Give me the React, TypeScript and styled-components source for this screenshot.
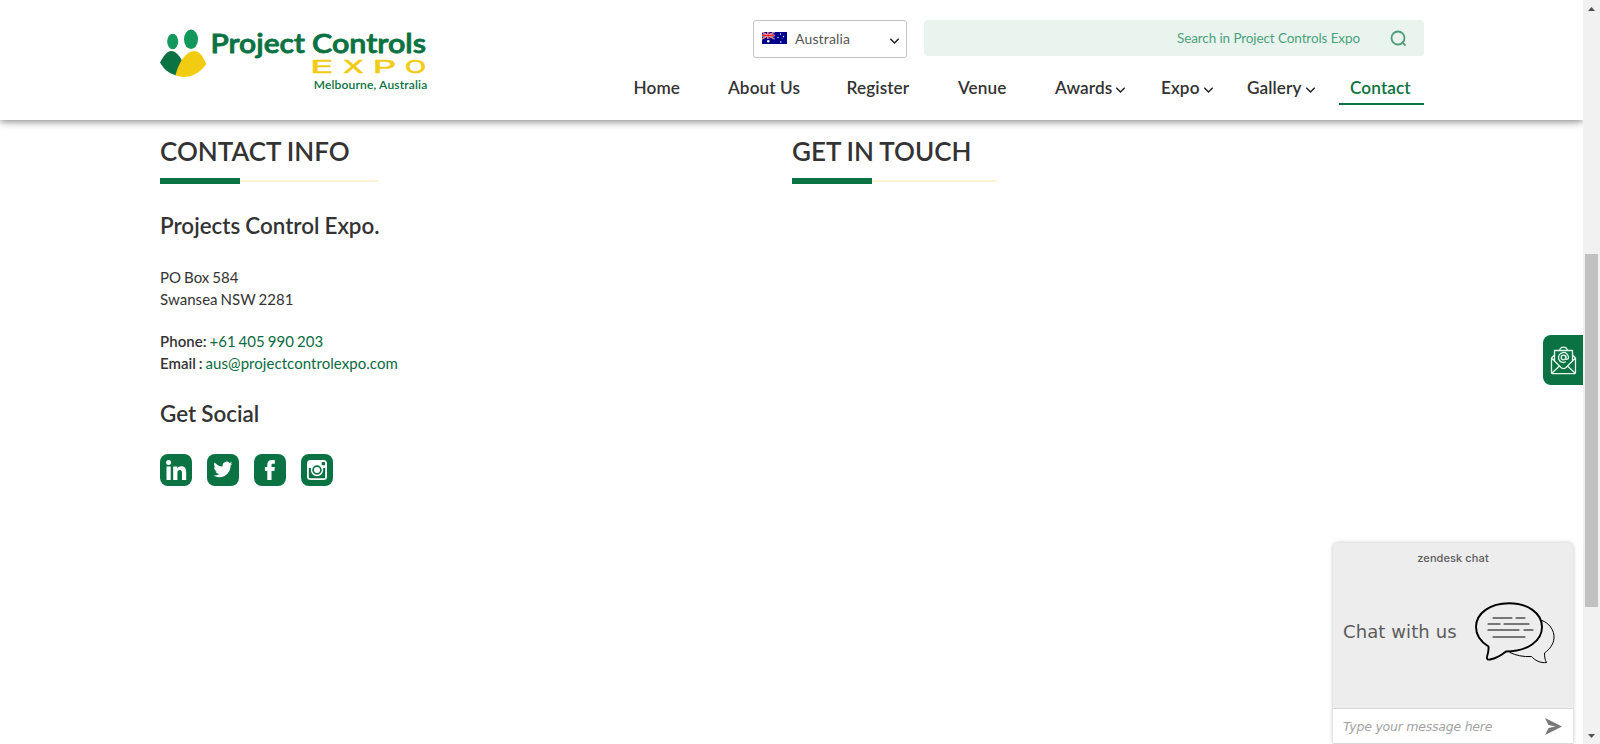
import React from 'react';
import styled, { createGlobalStyle } from 'styled-components';

const green = '#0b7243';

const GlobalStyle = createGlobalStyle`
  * { box-sizing: border-box; }
  body { margin: 0; background: #fff; overflow: hidden; font-family: Lato, "Liberation Sans", sans-serif; color: #333; }
  a { color: inherit; text-decoration: none; }
`;

const Shell = styled.div`
  display: flex;
  width: 1600px;
  height: 744px;
  overflow: hidden;
`;
const Page = styled.div`
  position: relative;
  flex: 1;
  overflow: hidden;
`;
const Header = styled.header`
  height: 120px;
  padding: 20px 159px 0 160px;
  display: flex;
  justify-content: space-between;
  background: #fff;
  box-shadow: 0 1px 8px rgba(0, 0, 0, 0.55);
`;
const Logo = styled.svg`
  display: block;
  width: 290px;
  height: 80px;
`;
const HeaderRight = styled.div`
  display: flex;
  flex-direction: column;
  align-items: flex-end;
`;
const Tools = styled.div`
  display: flex;
  gap: 17px;
`;
const CountrySelect = styled.div`
  width: 154px;
  height: 38px;
  padding: 0 6px 0 8px;
  display: flex;
  align-items: center;
  border: 1px solid #c4c4c4;
  border-radius: 3px;
  color: #555;
  font-size: 14px;
  line-height: 36px;
  letter-spacing: 0.15px;
  > svg:last-child { margin-top: 3px; }
`;
const Flag = styled.svg`
  width: 25px;
  height: 12px;
  margin: 0 8px 2px 0;
`;
const Country = styled.span`
  flex: 1;
`;
const Search = styled.div`
  width: 500px;
  height: 36px;
  padding: 0 17px 0 0;
  display: flex;
  justify-content: flex-end;
  align-items: center;
  gap: 30px;
  border-radius: 4px;
  background: #eaf4ef;
  color: #4aa27b;
  font-size: 13.5px;
  letter-spacing: -0.1px;
`;
const Nav = styled.nav`
  display: flex;
  margin-top: 18px;
`;
const NavItem = styled.a<{ $w: number; $active?: boolean }>`
  width: ${p => p.$w}px;
  height: 29px;
  padding: 0 0 3px ${p => (p.$active ? 11 : 0)}px;
  display: flex;
  align-items: center;
  gap: 3px;
  font-size: 17.2px;
  line-height: 24px;
  letter-spacing: 0.1px;
  font-weight: 600;
  white-space: nowrap;
  color: ${p => (p.$active ? green : '#333')};
  border-bottom: 2px solid ${p => (p.$active ? green : 'transparent')};
  svg { margin-top: 3px; }
`;
const Main = styled.main`
  display: grid;
  grid-template-columns: 632px 1fr;
  padding: 15px 0 0 160px;
`;
const SectionTitle = styled.h2`
  margin: 0;
  font-size: 26px;
  line-height: 32px;
  font-weight: 600;
  word-spacing: -0.5px;
`;
const Rule = styled.div<{ $w: number }>`
  width: ${p => p.$w}px;
  height: 6px;
  margin-top: 11px;
  display: flex;
  align-items: center;
  &::before { content: ''; width: 80px; height: 6px; background: ${green}; }
  &::after { content: ''; flex: 1; height: 2px; background: #fdf3d3; }
`;
const SubTitle = styled.h3<{ $top: number }>`
  margin: ${p => p.$top}px 0 0;
  font-size: 22.4px;
  line-height: 28px;
  font-weight: 600;
  word-spacing: -0.5px;
`;
const Details = styled.p<{ $top: number }>`
  margin: ${p => p.$top}px 0 0;
  font-size: 15px;
  line-height: 22px;
  letter-spacing: 0.05px;
  word-spacing: -1px;
  b { font-weight: 600; }
  a { color: #0b6a41; }
`;
const Socials = styled.div`
  display: flex;
  gap: 15px;
  margin-top: 26px;
`;
const SocialLink = styled.a`
  width: 32px;
  height: 32px;
  border-radius: 8px;
  background: ${green};
  svg { display: block; width: 32px; height: 32px; }
`;
const MailTab = styled.a`
  position: absolute;
  right: 0;
  top: 335px;
  width: 40px;
  height: 50px;
  border-radius: 8px 0 0 8px;
  background: ${green};
  svg { display: block; }
`;
const Chat = styled.section`
  position: absolute;
  left: 1333px;
  top: 543px;
  width: 240px;
  height: 201px;
  display: flex;
  flex-direction: column;
  background: #ededed;
  border-radius: 5px 5px 0 0;
  box-shadow: 0 0 4px rgba(0, 0, 0, 0.25);
  color: #5c5c5c;
  font-family: "DejaVu Sans", sans-serif;
`;
const ChatBrand = styled.div`
  padding-top: 7px;
  height: 34px;
  text-align: center;
  font: 500 11px/16px Inter, sans-serif;
  letter-spacing: 0.1px;
`;
const ChatBody = styled.div`
  flex: 1;
  display: flex;
  padding-left: 10px;
  font-size: 18px;
  line-height: 110px;
  letter-spacing: 0.1px;
  white-space: nowrap;
  svg { display: block; margin: 19px 1px 0 auto; }
`;
const ChatInput = styled.div`
  height: 36px;
  padding: 0 11px 0 10px;
  display: flex;
  align-items: center;
  justify-content: space-between;
  background: #fff;
  border: 1px solid #d8d8d8;
  border-width: 1px 0;
  color: #a3a3a3;
  font-size: 12.5px;
  letter-spacing: -0.23px;
  font-style: italic;
`;
const Scrollbar = styled.div`
  width: 17px;
  height: 744px;
  display: flex;
  flex-direction: column;
  justify-content: space-between;
  align-items: center;
  background: #f1f1f1;
  svg { display: block; }
`;
const Track = styled.div`
  flex: 1;
  padding-top: 237px;
`;
const Thumb = styled.div`
  width: 13px;
  height: 353px;
  background: #c1c1c1;
`;

const Chevron = () => (
  <svg width="11" height="8" viewBox="0 0 11 8" fill="none" stroke="#222" strokeWidth="1.5">
    <path d="M1.3 1.800 5.500 6 9.700 1.800" />
  </svg>
);

const nav = [
  { label: 'Home', w: 94.5 },
  { label: 'About Us', w: 118.5 },
  { label: 'Register', w: 111.5 },
  { label: 'Venue', w: 97 },
  { label: 'Awards', w: 106, menu: true },
  { label: 'Expo', w: 86, menu: true },
  { label: 'Gallery', w: 92, menu: true },
  { label: 'Contact', w: 85, active: true },
];

const expo = [
  { letter: 'E', x: 150.1, sx: 2.25 },
  { letter: 'X', x: 183.2, sx: 1.7 },
  { letter: 'P', x: 212.7, sx: 2.1 },
  { letter: 'O', x: 245, sx: 1.58 },
];

const socials = [
  {
    name: 'LinkedIn',
    art: (
      <g fill="#fff">
        <circle cx="8.600" cy="8.400" r="2.500" />
        <path d="M6.500 12.500h4.200V26H6.500zM13.200 12.500h4v1.900c.8-1.400 2.300-2.200 4.100-2.200 4 0 4.900 2.600 4.900 6.200V26H22v-6.800c0-1.800-.3-3.300-2.200-3.300s-2.400 1.400-2.400 3.200V26h-4.200z" />
      </g>
    ),
  },
  {
    name: 'Twitter',
    art: (
      <path
        transform="translate(6.300 5.900) scale(.8)"
        fill="#fff"
        d="M23.950 4.570a10 10 0 0 1-2.820.77 4.960 4.960 0 0 0 2.160-2.720c-.95.55-2 .95-3.130 1.180a4.920 4.920 0 0 0-8.380 4.480C7.690 8.090 4.070 6.130 1.640 3.160a4.800 4.800 0 0 0-.67 2.480c0 1.710.87 3.210 2.190 4.100a4.900 4.900 0 0 1-2.230-.62v.06a4.920 4.920 0 0 0 3.950 4.830 5 5 0 0 1-2.210.08 4.940 4.940 0 0 0 4.600 3.420A9.870 9.870 0 0 1 0 19.540a13.990 13.990 0 0 0 7.560 2.210c9.050 0 14-7.500 14-13.980 0-.21 0-.42-.02-.63a9.940 9.940 0 0 0 2.460-2.550z"
      />
    ),
  },
  {
    name: 'Facebook',
    art: <path fill="#fff" d="M13.300 26V16.900h-2.400v-3.800h2.400v-2.400c0-3 1.500-4.700 4.500-4.700h3v3.700h-1.900c-1.200 0-1.400.5-1.400 1.400v2h3.300l-.4 3.800h-2.900V26z" />,
  },
  {
    name: 'Instagram',
    art: (
      <>
        <rect x="6" y="6" width="20" height="20" rx="3.500" fill="#fff" />
        <path d="M7.800 14h16.400v8.700a1.500 1.500 0 0 1-1.500 1.500H9.300a1.500 1.500 0 0 1-1.500-1.500z" fill={green} />
        <circle cx="16" cy="16" r="6.200" fill="#fff" />
        <circle cx="16" cy="16" r="3.900" fill="none" stroke={green} strokeWidth="1.700" />
        <rect x="20.700" y="8" width="3.300" height="3.300" rx=".5" fill={green} />
      </>
    ),
  },
];

function BrandLogo() {
  return (
    <Logo viewBox="0 0 290 80">
      <ellipse cx="12.700" cy="21.500" rx="5.500" ry="7.700" fill="#12985a" />
      <ellipse cx="31" cy="19.300" rx="7" ry="9.700" fill="#12985a" />
      <path d="M0 42.500C3 37 6.500 31 11.500 31c4 0 8 5 10.500 9.500L16 55.400C9 53.500 3.500 49 0 42.500z" fill={green} />
      <path d="M15.500 55.300C18 44 25.500 31 34.500 31 39.500 31 44 38 46.200 44.200 39 54.500 27 60 15.500 55.300z" fill="#f2cb13" />
      <g fill={green} stroke={green} fontFamily="Lato, sans-serif">
        <text x="50.500" y="33.300" fontSize="27" fontWeight="600" strokeWidth=".8" strokeLinejoin="round" textLength="94.500" lengthAdjust="spacingAndGlyphs">Project</text>
        <text x="152" y="33.300" fontSize="27" fontWeight="600" strokeWidth=".8" strokeLinejoin="round" textLength="114" lengthAdjust="spacingAndGlyphs">Controls</text>
        <text x="153.700" y="69" fontSize="12" fontWeight="600" stroke="none" textLength="113.500">Melbourne, Australia</text>
      </g>
      {expo.map(l => (
        <g key={l.letter} transform={`translate(${l.x} 53) scale(${l.sx} 1)`}>
          <text fill="#f2cb13" stroke="#f2cb13" strokeWidth=".8" vectorEffect="non-scaling-stroke" strokeLinejoin="round" fontFamily="Inter, sans-serif" fontSize="17.500" fontWeight="400">{l.letter}</text>
        </g>
      ))}
    </Logo>
  );
}

export default function App() {
  return (
    <>
      <GlobalStyle />
      <Shell>
        <Page>
          <Header>
            <BrandLogo />
            <HeaderRight>
              <Tools>
                <CountrySelect>
                  <Flag viewBox="0 0 25 12">
                    <path fill="#00008b" d="M0 0h25v12H0z" />
                    <path d="M0 0l12.500 7M12.500 0 0 7" stroke="#fff" strokeWidth="1.200" />
                    <path d="M0 0l12.500 7M12.500 0 0 7" stroke="#f33" strokeWidth=".7" />
                    <path d="M6.200 0v7M0 3.500h12.500" stroke="#fff" strokeWidth="2" />
                    <path d="M6.200 0v7M0 3.500h12.500" stroke="#f22" strokeWidth="1.300" />
                    <g fill="#fff">
                      <circle cx="6.300" cy="9.200" r="1.300" /><circle cx="18.500" cy="2" r=".7" />
                      <circle cx="16" cy="5.400" r=".7" /><circle cx="21.500" cy="4.500" r=".7" />
                      <circle cx="18.800" cy="10" r=".8" /><circle cx="20" cy="6.600" r=".4" />
                    </g>
                  </Flag>
                  <Country>Australia</Country>
                  <Chevron />
                </CountrySelect>
                <Search>
                  <span>Search in Project Controls Expo</span>
                  <svg width="17" height="17" viewBox="0 0 17 17" fill="none" stroke="#4f9c78" strokeWidth="1.800">
                    <circle cx="8" cy="8" r="6.500" /><path d="m11.800 11.800 3.800 3.800" />
                  </svg>
                </Search>
              </Tools>
              <Nav>
                {nav.map(n => (
                  <NavItem key={n.label} $w={n.w} $active={n.active}>
                    {n.label}
                    {n.menu && <Chevron />}
                  </NavItem>
                ))}
              </Nav>
            </HeaderRight>
          </Header>
          <Main>
            <section>
              <SectionTitle>CONTACT INFO</SectionTitle>
              <Rule $w={218} />
              <SubTitle $top={28}>Projects Control Expo.</SubTitle>
              <Details $top={26}>PO Box 584<br />Swansea NSW 2281</Details>
              <Details $top={20}>
                <b>Phone:</b> <a>+61 405 990 203</a><br />
                <b>Email :</b> <a>aus@projectcontrolexpo.com</a>
              </Details>
              <SubTitle $top={26}>Get Social</SubTitle>
              <Socials>
                {socials.map(s => (
                  <SocialLink key={s.name} aria-label={s.name}>
                    <svg viewBox="0 0 32 32">{s.art}</svg>
                  </SocialLink>
                ))}
              </Socials>
            </section>
            <section>
              <SectionTitle>GET IN TOUCH</SectionTitle>
              <Rule $w={205} />
            </section>
          </Main>
          <MailTab>
            <svg width="40" height="50" viewBox="0 0 40 50" fill="none" stroke="#e4f5ec" strokeWidth="1.300" strokeLinejoin="round">
              <path d="M11.500 27V15.500h18V27M16.500 15.500c1-4.500 7-4.500 8 0M11.500 20l-3 3v14.500a1.200 1.200 0 0 0 1.200 1.200h21.600a1.200 1.200 0 0 0 1.200-1.200V23l-3-3M8.500 23l9.500 9.500c1.700 1.600 3.300 1.600 5 0L32.500 23M9 38l7.500-7M32 38l-7.500-7" />
              <circle cx="20.500" cy="22.500" r="2.300" />
              <path d="M22.800 20.500v2.500c0 2 2.700 1.700 2.700-.5a5 5 0 1 0-2.500 4.300" />
            </svg>
          </MailTab>
          <Chat>
            <ChatBrand>zendesk chat</ChatBrand>
            <ChatBody>
              Chat with us
              <svg width="98" height="75" viewBox="0 0 98 75" fill="none" stroke="#000" strokeLinecap="round" strokeLinejoin="round">
                <path strokeWidth="1" d="M68 24.500C75 27 80.500 34 80 42c-.4 6-4 11-9.500 15 0 4 .5 7 2 9.500-6 1-12-2.500-15-6C49 61 42 59.500 36 56.500" />
                <path strokeWidth="1.900" d="M14.500 50.500C7 46 2 39 2 31 2 17 16.500 7.200 35 7.200S68 17 68 31 53.500 55.300 32 55.500c-5 4-10 7-16 8-2 .5-3.500-.5-3-2.500 1-3.500 2-7 1.500-10.500z" />
                <path strokeWidth="1.100" d="M19 22h19M42 22h9M14 28h12M30 28h25M14 34h31M50 34h9M19 41h32" />
              </svg>
            </ChatBody>
            <ChatInput>
              Type your message here
              <svg width="17" height="17" viewBox="0 0 17 17"><path fill="#777" d="M0 0l17 8.500L0 17l3.500-7 7-1.500-7-1.500z" /></svg>
            </ChatInput>
          </Chat>
        </Page>
        <Scrollbar>
          <svg width="17" height="17"><path fill="#505050" d="M5 11h7L8.500 7z" /></svg>
          <Track><Thumb /></Track>
          <svg width="17" height="17"><path fill="#505050" d="M5 7h7l-3.500 4z" /></svg>
        </Scrollbar>
      </Shell>
    </>
  );
}
